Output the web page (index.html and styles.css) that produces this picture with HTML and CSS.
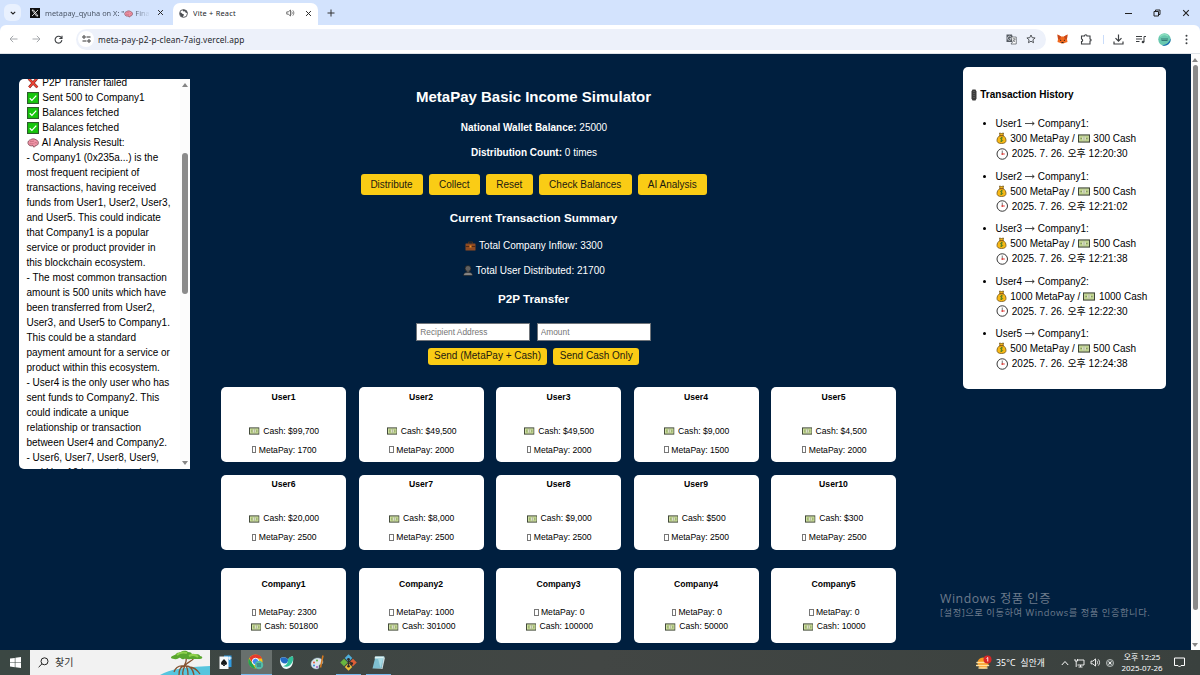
FILE: index.html
```html
<!DOCTYPE html>
<html lang="ko">
<head>
<meta charset="utf-8">
<title>Vite + React</title>
<link rel="stylesheet" href="styles.css">
</head>
<body>
<svg class="defs" width="0" height="0">
  <symbol id="cash" viewBox="0 0 22 16"><rect x="1" y="1.500" width="20" height="13" fill="#d3e3a6" stroke="#3d4435" stroke-width="2"/><rect x="4" y="4" width="14" height="8" fill="#b4cb80"/><ellipse cx="11" cy="8" rx="3.200" ry="4" fill="#eef3db"/><path d="M11 4v8M4.500 8h3M14.500 8h3" stroke="#75805e" stroke-width="1.300"/></symbol>
  <symbol id="check" viewBox="0 0 22 22"><rect x="1" y="1" width="20" height="20" fill="#16c60c" stroke="#2c5d2a" stroke-width="2"/><path d="M5 11.500l4 4L17 6.500" fill="none" stroke="#fff" stroke-width="2.200"/></symbol>
  <symbol id="cross" viewBox="0 0 22 22"><path d="M3 3l16 16M18 3L4 19" stroke="#6b211b" stroke-width="5"/><path d="M3 3l16 16M18 3L4 19" stroke="#ee4436" stroke-width="3"/></symbol>
  <symbol id="brain" viewBox="0 0 24 20"><path d="M2 11C1 7 4 4 7 3.500C10 1 15 1 18 3.500C22 4.500 24 9 22 12.500C21 15 18 15 17 15C16 18 14 19 13 18L12 15C8 17 3 15 2 11z" fill="#ef93a5" stroke="#75424e" stroke-width="1.500"/><path d="M6 8c3-3 5 0 8-2M5 12c3-2 4 1 8-1M15 10c2-2 4 0 5 0" fill="none" stroke="#b75d70" stroke-width="1.300"/></symbol>
  <symbol id="bag" viewBox="0 0 20 24"><path d="M6 2l4 1 4-1-1 5c4 2 6 6 6 10 0 4-3 6-9 6s-9-2-9-6c0-4 2-8 6-10z" fill="#f9b916" stroke="#6b4d12" stroke-width="1.500"/><path d="M6 7.500h8" stroke="#7d4b13" stroke-width="2"/><path d="M13 12c-5-2-7 2-3 3s3 5-3 3M10 10v10" fill="none" stroke="#3d7a28" stroke-width="1.500"/></symbol>
  <symbol id="clock" viewBox="0 0 24 24"><circle cx="12" cy="12" r="10.500" fill="#fff" stroke="#393939" stroke-width="2"/><path d="M12 5v8" stroke="#444" stroke-width="1.500"/><path d="M12 12h5" stroke="#e53935" stroke-width="2"/><circle cx="12" cy="12" r="1.700" fill="#e53935"/></symbol>
  <symbol id="case" viewBox="0 0 22 20"><path d="M7 5V2h8v3" fill="none" stroke="#44301f" stroke-width="2"/><rect x="1" y="5" width="20" height="14" rx="1" fill="#8e4a22"/><path d="M1 11h20" stroke="#522b15" stroke-width="2"/><rect x="9" y="9" width="4" height="4" fill="#f09024"/></symbol>
  <symbol id="person" viewBox="0 0 20 22"><circle cx="10" cy="7" r="6" fill="#606060" stroke="#1c1c1c" stroke-width="1.500"/><path d="M10 12v4" stroke="#4c4c4c" stroke-width="5"/><path d="M1 21c0-5 3-6 9-6s9 1 9 6z" fill="#858585" stroke="#161616"/></symbol>
  <symbol id="x" viewBox="0 0 8 8"><path d="M1.200 1.200l5.600 5.600M6.800 1.200L1.200 6.800" stroke="currentColor" stroke-width="1.100"/></symbol>
  <symbol id="speaker" viewBox="0 0 12 10"><path d="M1 3.500h2L6 1v8L3 6.500H1z" fill="none" stroke="currentColor"/><path d="M7.500 3c1 1 1 3 0 4M9 1.500c2 2 2 5 0 7" fill="none" stroke="currentColor" stroke-width=".9"/></symbol>
</svg>

<header class="browser">
  <div class="tabstrip">
    <div class="tab-search"><svg width="6" height="4" viewBox="0 0 6 4"><path d="M.8.800L3 3 5.200.800" fill="none" stroke="#1f1f1f" stroke-width="1.100"/></svg></div>
    <div class="tab tab-idle">
      <svg class="fav" width="10" height="10" viewBox="0 0 10 10"><rect width="10" height="10" fill="#111"/><path d="M2 2h1.500L8 8H6.500zM8 2L2 8" fill="none" stroke="#fff" stroke-width=".8"/></svg>
      <span class="tab-title">metapay_qyuha on X: "<svg width="9" height="8"><use href="#brain"/></svg> Fina</span>
      <svg class="close" width="7" height="7"><use href="#x"/></svg>
    </div>
    <div class="tab tab-active">
      <svg class="fav" width="9" height="9" viewBox="0 0 18 18"><circle cx="9" cy="9" r="7.800" fill="#fff" stroke="#4a4d51" stroke-width="1.800"/><path d="M2 7c4-1 3 3 6 3s1 4 0 6C4 16 1 12 2 7zM8 1.500c-1 3 1 4 3 3s1 3 3 3 2 2 3 1C17 4 13 1 8 1.500z" fill="#4a4d51"/></svg>
      <span class="tab-title">Vite + React</span>
      <svg class="sound" width="9" height="8" color="#444"><use href="#speaker"/></svg>
      <svg class="close" width="7" height="7"><use href="#x"/></svg>
    </div>
    <svg class="plus" width="8" height="8" viewBox="0 0 8 8"><path d="M4 .500v7M.5 4h7" stroke="#333" stroke-width="1"/></svg>
    <div class="window-buttons">
      <svg width="7" height="8" viewBox="0 0 7 8"><path d="M0 4.500h7" stroke="#222"/></svg>
      <svg width="8" height="8" viewBox="0 0 8 8"><path d="M1 2.500h4.500V7H1zM2.500 2.500V1H7v4.500H5.500" fill="none" stroke="#222"/></svg>
      <svg width="8" height="8"><use href="#x"/></svg>
    </div>
  </div>
  <div class="toolbar">
    <div class="nav">
      <svg width="9" height="8" viewBox="0 0 9 8"><path d="M8.500 4H1M4.200.800L1 4l3.200 3.200" fill="none" stroke="#a5a8ac"/></svg>
      <svg width="9" height="8" viewBox="0 0 9 8"><path d="M.5 4H8M4.800.800L8 4 4.800 7.200" fill="none" stroke="#a5a8ac"/></svg>
      <svg width="9" height="9" viewBox="0 0 9 9"><path d="M7.500 3A3.400 3.400 0 1 0 7.900 5.200M8 .800v2.700H5.300" fill="none" stroke="#3c3f42" stroke-width="1.100"/></svg>
    </div>
    <div class="address">
      <div class="site-info"><svg width="9" height="8" viewBox="0 0 9 8"><g fill="none" stroke="#333"><circle cx="2" cy="2" r="1.200"/><path d="M4.500 2H8.500M.5 6h4"/><circle cx="7" cy="6" r="1.200"/></g></svg></div>
      <span class="url">meta-pay-p2-p-clean-7aig.vercel.app</span>
      <svg class="translate" width="11" height="11" viewBox="0 0 22 22"><path d="M1 1h11l4 15H1z" fill="#555b62"/><path d="M11 6h9.500v14H10l3-4" fill="#fff" stroke="#555b62" stroke-width="1.500"/><path d="M10 6a4 4 0 1 0 0 5V9H7" fill="none" stroke="#e8ebf0" stroke-width="1.400"/><path d="M13 10h6M16 8v2M18 10c-1 3-3 5-5 6M14 12l4 4" fill="none" stroke="#555b62" stroke-width="1.300"/></svg>
      <svg width="10" height="10" viewBox="0 0 20 20"><path d="M10 2l2.400 5.300 5.800.6-4.400 3.800 1.300 5.700L10 14.500l-5.100 2.900 1.300-5.700L1.800 7.900l5.800-.6z" fill="none" stroke="#3c3f42" stroke-width="1.700"/></svg>
    </div>
    <div class="actions">
      <svg width="11" height="10" viewBox="0 0 22 20"><path d="M1 1l7 4h6l7-4-1 9 1 6-6 2-2 1H9l-2-1-6-2 1-6z" fill="#f0681d"/><path d="M1 1l7 4-2 6-4-1zM21 1l-7 4 2 6 4-1z" fill="#c9481a"/><path d="M6 11l3 2-3 1zM16 11l-3 2 3 1zM9 16h4v2H9z" fill="#33261f"/></svg>
      <svg class="puzzle" width="12" height="11" viewBox="0 0 12 11"><path d="M1.500 2h3c0-1.600 2.500-1.600 2.500 0h3v3c1.500 0 1.500 2 0 2v3h-8.500V7.500c1.500 0 1.500-2.500 0-2.500z" fill="none" stroke="#3c3f42" stroke-width="1.100"/></svg>
      <i class="divider"></i>
      <svg class="download" width="11" height="11" viewBox="0 0 11 11"><path d="M5.500.500v6.500M2.500 4.200l3 3 3-3M1 7.500V10h9V7.500" fill="none" stroke="#3c3f42" stroke-width="1.200"/></svg>
      <svg class="media" width="10" height="9" viewBox="0 0 10 9"><path d="M0 1.500h6M0 4h6M0 6.500h3.500M8 7V1.500h2" fill="none" stroke="#3c3f42"/><circle cx="7" cy="7" r="1.300" fill="#3c3f42"/></svg>
      <svg class="avatar" width="13" height="13" viewBox="0 0 26 26"><circle cx="13" cy="13" r="12.500" fill="#68c8ae"/><path d="M8 24.500a12.500 12.500 0 0 0 17-14c-1 7-7 13-17 14" fill="#1464b3"/><path d="M6 12h14M7 15h12" stroke="#347b75" stroke-width="2"/><path d="M4 7c5-6 12-5 16-1" fill="none" stroke="#8cdfbf" stroke-width="3"/></svg>
      <svg class="menu" width="3" height="11" viewBox="0 0 3 11"><g fill="#3c3f42"><circle cx="1.500" cy="1.700" r="1"/><circle cx="1.500" cy="5.500" r="1"/><circle cx="1.500" cy="9.300" r="1"/></g></svg>
    </div>
  </div>
</header>

<div class="viewport">
  <aside class="log">
    <div class="log-text">
      <p><svg class="em"><use href="#cross"/></svg> P2P Transfer failed</p>
      <p><svg class="em"><use href="#check"/></svg> Sent 500 to Company1</p>
      <p><svg class="em"><use href="#check"/></svg> Balances fetched</p>
      <p><svg class="em"><use href="#check"/></svg> Balances fetched</p>
      <p><svg class="em"><use href="#brain"/></svg> AI Analysis Result:</p>
      <p>- Company1 (0x235a...) is the<br>most frequent recipient of<br>transactions, having received<br>funds from User1, User2, User3,<br>and User5. This could indicate<br>that Company1 is a popular<br>service or product provider in<br>this blockchain ecosystem.</p>
      <p>- The most common transaction<br>amount is 500 units which have<br>been transferred from User2,<br>User3, and User5 to Company1.<br>This could be a standard<br>payment amount for a service or<br>product within this ecosystem.</p>
      <p>- User4 is the only user who has<br>sent funds to Company2. This<br>could indicate a unique<br>relationship or transaction<br>between User4 and Company2.</p>
      <p>- User6, User7, User8, User9,<br>and User10 have not made</p>
    </div>
    <div class="scrollbar log-scroll"><i class="up"></i><b></b><i class="down"></i></div>
  </aside>

  <main>
    <section class="panel">
      <h1>MetaPay Basic Income Simulator</h1>
      <p class="balance"><strong>National Wallet Balance:</strong> 25000</p>
      <p class="count"><strong>Distribution Count:</strong> 0 times</p>
      <div class="buttons">
        <button class="b1">Distribute</button><button class="b2">Collect</button><button class="b3">Reset</button><button class="b4">Check Balances</button><button class="b5">AI Analysis</button>
      </div>
      <h3 class="summary">Current Transaction Summary</h3>
      <p class="inflow"><svg class="em-s"><use href="#case"/></svg> Total Company Inflow: 3300</p>
      <p class="count"><svg class="em-p"><use href="#person"/></svg> Total User Distributed: 21700</p>
      <h3 class="p2p">P2P Transfer</h3>
      <div class="inputs"><input placeholder="Recipient Address"><input placeholder="Amount"></div>
      <div class="send"><button class="s1">Send (MetaPay + Cash)</button><button class="s2">Send Cash Only</button></div>
    </section>
    <section class="cards">
      <article><h4>User1</h4><p><svg class="bill"><use href="#cash"/></svg> Cash: $99,700</p><p><i class="box"></i> MetaPay: 1700</p></article>
      <article><h4>User2</h4><p><svg class="bill"><use href="#cash"/></svg> Cash: $49,500</p><p><i class="box"></i> MetaPay: 2000</p></article>
      <article><h4>User3</h4><p><svg class="bill"><use href="#cash"/></svg> Cash: $49,500</p><p><i class="box"></i> MetaPay: 2000</p></article>
      <article><h4>User4</h4><p><svg class="bill"><use href="#cash"/></svg> Cash: $9,000</p><p><i class="box"></i> MetaPay: 1500</p></article>
      <article><h4>User5</h4><p><svg class="bill"><use href="#cash"/></svg> Cash: $4,500</p><p><i class="box"></i> MetaPay: 2000</p></article>
      <article><h4>User6</h4><p><svg class="bill"><use href="#cash"/></svg> Cash: $20,000</p><p><i class="box"></i> MetaPay: 2500</p></article>
      <article><h4>User7</h4><p><svg class="bill"><use href="#cash"/></svg> Cash: $8,000</p><p><i class="box"></i> MetaPay: 2500</p></article>
      <article><h4>User8</h4><p><svg class="bill"><use href="#cash"/></svg> Cash: $9,000</p><p><i class="box"></i> MetaPay: 2500</p></article>
      <article><h4>User9</h4><p><svg class="bill"><use href="#cash"/></svg> Cash: $500</p><p><i class="box"></i> MetaPay: 2500</p></article>
      <article><h4>User10</h4><p><svg class="bill"><use href="#cash"/></svg> Cash: $300</p><p><i class="box"></i> MetaPay: 2500</p></article>
    </section>
    <section class="cards companies">
      <article><h4>Company1</h4><p><i class="box"></i> MetaPay: 2300</p><p><svg class="bill"><use href="#cash"/></svg> Cash: 501800</p></article>
      <article><h4>Company2</h4><p><i class="box"></i> MetaPay: 1000</p><p><svg class="bill"><use href="#cash"/></svg> Cash: 301000</p></article>
      <article><h4>Company3</h4><p><i class="box"></i> MetaPay: 0</p><p><svg class="bill"><use href="#cash"/></svg> Cash: 100000</p></article>
      <article><h4>Company4</h4><p><i class="box"></i> MetaPay: 0</p><p><svg class="bill"><use href="#cash"/></svg> Cash: 50000</p></article>
      <article><h4>Company5</h4><p><i class="box"></i> MetaPay: 0</p><p><svg class="bill"><use href="#cash"/></svg> Cash: 10000</p></article>
    </section>
  </main>

  <aside class="history">
    <h2><svg width="6" height="12" viewBox="0 0 12 24"><path d="M3 1h6l2 4v14l-2 4H3l-2-4V5z" fill="#3b3b3b"/><path d="M4 5h4M4 9h4M4 13h4M4 17h4" stroke="#555" stroke-width="2"/></svg> Transaction History</h2>
    <ul>
      <li>User1 <svg class="arrow" viewBox="0 0 20 10"><path d="M0 5h18M14 1.500L18.500 5 14 8.500" /></svg> Company1:<br><svg class="em-b"><use href="#bag"/></svg> 300 MetaPay / <svg class="em-c"><use href="#cash"/></svg> 300 Cash<br><svg class="em-k"><use href="#clock"/></svg> 2025. 7. 26. <span class="ko">오후</span> 12:20:30</li>
      <li>User2 <svg class="arrow" viewBox="0 0 20 10"><path d="M0 5h18M14 1.500L18.500 5 14 8.500" /></svg> Company1:<br><svg class="em-b"><use href="#bag"/></svg> 500 MetaPay / <svg class="em-c"><use href="#cash"/></svg> 500 Cash<br><svg class="em-k"><use href="#clock"/></svg> 2025. 7. 26. <span class="ko">오후</span> 12:21:02</li>
      <li>User3 <svg class="arrow" viewBox="0 0 20 10"><path d="M0 5h18M14 1.500L18.500 5 14 8.500" /></svg> Company1:<br><svg class="em-b"><use href="#bag"/></svg> 500 MetaPay / <svg class="em-c"><use href="#cash"/></svg> 500 Cash<br><svg class="em-k"><use href="#clock"/></svg> 2025. 7. 26. <span class="ko">오후</span> 12:21:38</li>
      <li>User4 <svg class="arrow" viewBox="0 0 20 10"><path d="M0 5h18M14 1.500L18.500 5 14 8.500" /></svg> Company2:<br><svg class="em-b"><use href="#bag"/></svg> 1000 MetaPay / <svg class="em-c"><use href="#cash"/></svg> 1000 Cash<br><svg class="em-k"><use href="#clock"/></svg> 2025. 7. 26. <span class="ko">오후</span> 12:22:30</li>
      <li>User5 <svg class="arrow" viewBox="0 0 20 10"><path d="M0 5h18M14 1.500L18.500 5 14 8.500" /></svg> Company1:<br><svg class="em-b"><use href="#bag"/></svg> 500 MetaPay / <svg class="em-c"><use href="#cash"/></svg> 500 Cash<br><svg class="em-k"><use href="#clock"/></svg> 2025. 7. 26. <span class="ko">오후</span> 12:24:38</li>
    </ul>
  </aside>
  <div class="scrollbar page-scroll"><i class="up"></i><b></b><i class="down"></i></div>
  <div class="watermark"><p>Windows 정품 인증</p><p>[설정]으로 이동하여 Windows를 정품 인증합니다.</p></div>
</div>

<footer class="taskbar">
  <div class="start"><svg width="11" height="11" viewBox="0 0 11 11"><path d="M0 1.500L4.800.900v4.300H0zM5.400.800L11 0v5.200H5.400zM0 5.800h4.800v4.400L0 9.500zM5.400 5.800H11V11l-5.600-.7z" fill="#fff"/></svg></div>
  <div class="search">
    <svg width="11" height="11" viewBox="0 0 11 11"><circle cx="6.500" cy="4.300" r="3.500" fill="none" stroke="#222"/><path d="M4 6.800L.6 10.200" stroke="#222"/></svg>
    <span>찾기</span>
    <svg class="tree" width="50" height="25" viewBox="0 0 50 25"><path d="M0 25C10 19 25 17 50 16v9z" fill="#56c5de"/><path d="M26 8c1 4-1 6-2 8M34 8c-2 4-8 4-9 8M25 16c-5 0-6 4-6 9M25 16c-2 3-3 5-2 9M26 16c5 0 7 4 8 9M26 16c2 3 2 5 2 9M29 17c6 0 9 4 11 7M24 16c-6-1-9 3-10 6" fill="none" stroke="#84512f" stroke-width="1.300"/><path d="M11 8c0-3 4-2 5-4s4-1 5-2c3-2 6-1 7 0 3 0 4 1 4 3 4-1 8-1 8 1 3 0 3 3 0 3H31c-3 1-5-1-7 0-3 1-3-2-5-1-3 2-6 1-8 0z" fill="#59a62f"/><path d="M17 5c3-3 6-3 10-2M29 6c4-2 7-1 9 1" fill="none" stroke="#8fd04d" stroke-width="2"/></svg>
  </div>
  <nav class="apps">
    <div class="app"><svg width="15" height="15" viewBox="0 0 30 30"><rect x="12" y="1" width="15" height="23" fill="#319be0"/><rect x="3" y="3" width="18" height="25" fill="#f6f8f9"/><path d="M12 8c3 4 6 5 6 9 0 3-4 4-5 1l1 4h-4l1-4c-1 3-5 2-5-1 0-4 3-5 6-9z" fill="#15191c"/><path d="M20 6h7M23.500 3v7" stroke="#fff" stroke-width="2"/></svg></div>
    <div class="app current"><svg width="16" height="16" viewBox="0 0 32 32"><circle cx="15" cy="15" r="14" fill="#fbc116"/><path d="M3 8a14 14 0 0 1 25 1H15l-6 9z" fill="#e33b2e"/><path d="M2 9l8 12 5 8A14 14 0 0 1 2 9z" fill="#22a455"/><circle cx="15" cy="15" r="6.500" fill="#4286f4" stroke="#fff" stroke-width="2"/><circle cx="22" cy="22" r="8.500" fill="#54bca8"/><path d="M17 20h9M18 24h8" stroke="#2b6670" stroke-width="2"/></svg></div>
    <div class="app"><svg width="15" height="15" viewBox="0 0 30 30"><path d="M2 7C8 3 14 4 18 9c3-5 6-6 10-6 2 14-3 24-13 25C7 28 1 18 2 7z" fill="#effbfb"/><path d="M2 7C8 3 14 4 18 9c1 4-2 8-6 8C7 17 3 13 2 7z" fill="#236bc5"/><path d="M18 9c3-5 6-6 10-6 1 9-1 13-8 19-4 3-9 1-13 0 7 0 11-5 11-13z" fill="#2fc099"/></svg></div>
    <div class="app"><svg width="15" height="15" viewBox="0 0 30 30"><path d="M2 18C2 10 10 5 17 6c7 1 10 6 8 11-2 3-6 1-7 4s2 6-4 7C7 28 2 24 2 18z" fill="#dbe5eb" stroke="#87a6bb"/><circle cx="8" cy="15" r="2" fill="#e85b38"/><circle cx="14" cy="11" r="2" fill="#5cb63d"/><circle cx="8" cy="21" r="2" fill="#318cda"/><circle cx="14" cy="24" r="2" fill="#9b5ac0"/><path d="M26 1l-5 24" stroke="#d57a20" stroke-width="3"/></svg></div>
    <div class="app running"><svg width="17" height="17" viewBox="0 0 32 32"><g transform="rotate(45 16 16)"><path d="M5 5h10v10H5z" fill="#4eaddb"/><path d="M17 5h10v10H17z" fill="#df5e36"/><path d="M5 17h10v10H5z" fill="#68b540"/><path d="M17 17h10v10H17z" fill="#edbd36"/></g><path d="M16 9v14M16 12l6 6" stroke="#312f2e" stroke-width="2"/><circle cx="16" cy="10" r="2.500" fill="#2e2b29"/><circle cx="22" cy="18" r="2.500" fill="#2e2b29"/><circle cx="16" cy="23" r="2.500" fill="#2e2b29"/></svg></div>
    <div class="app running"><svg width="15" height="15" viewBox="0 0 30 30"><path d="M9 3h18l-6 24H3z" fill="#7fc0d2"/><path d="M8 3h18l-1 4H7z" fill="#ddf3f5"/><path d="M25 5l3 0-5 23H5l16-1z" fill="#cbdce0"/><path d="M14 7h10l-5 19z" fill="#a9dbe4"/></svg></div>
  </nav>
  <div class="weather">
    <svg width="16" height="15" viewBox="0 0 32 30"><circle cx="14" cy="16" r="11" fill="#f79a21"/><path d="M2 15h20M1 21h24M6 26h16" stroke="#ffe2a1" stroke-width="3" stroke-linecap="round"/><circle cx="23" cy="9" r="8" fill="#d72828"/><path d="M21 7l2.500-2v8" fill="none" stroke="#fff" stroke-width="1.800"/></svg>
    <span>35°C&nbsp; 실안개</span>
  </div>
  <div class="tray">
    <svg width="8" height="6" viewBox="0 0 8 6"><path d="M.8 5L4 1.500 7.200 5" fill="none" stroke="#fff"/></svg>
    <svg width="11" height="10" viewBox="0 0 11 10"><path d="M4 2h6v5H3.500M6.500 7v2M4.500 9h4M1 1v2h2.500V1M2.200 3v6" fill="none" stroke="#fff" stroke-width=".9"/></svg>
    <svg width="11" height="9" color="#fff"><use href="#speaker"/></svg>
    <svg width="8" height="8" viewBox="0 0 8 8"><circle cx="4" cy="4" r="3.600" fill="#606866" stroke="#cfd2d1" stroke-width=".7"/><path d="M2.500 2.500l3 3M5.500 2.500l-3 3" stroke="#fff" stroke-width=".9"/></svg>
  </div>
  <div class="clock"><span>오후 12:25</span><span>2025-07-26</span></div>
  <svg class="notify" width="11" height="11" viewBox="0 0 11 11"><path d="M.5 1h10v7.500H7L5.500 10 4 8.500H.5z" fill="none" stroke="#fff"/></svg>
</footer>
</body>
</html>
```

FILE: styles.css
```css
* { box-sizing: border-box; }
body { margin: 0; width: 1200px; height: 675px; overflow: hidden; display: flex; flex-direction: column; font: 10px "Liberation Sans", Arial, "Noto Sans CJK KR", sans-serif; }
h1, h2, h3, h4, p, ul { margin: 0; padding: 0; }
svg { flex: none; }
.defs { position: absolute; }

/* Browser chrome */
.browser { height: 54px; flex: none; background: #d3e3fd; color: #24272b; font-family: "Noto Sans", "Noto Sans CJK KR", sans-serif; }
.tabstrip { height: 25px; display: flex; align-items: center; }
.tab-search { width: 17px; height: 17px; margin-left: 4px; border-radius: 6px; background: #e9f1fe; display: flex; align-items: center; justify-content: center; }
.tab { display: flex; align-items: center; height: 22px; font-size: 7.400px; white-space: nowrap; }
.tab-idle { width: 152px; padding: 0 9px; color: #4c5768; }
.tab-title { flex: 1; margin-left: 5px; overflow: hidden; }
.tab-title svg { vertical-align: -2px; }
.tab-idle .tab-title { -webkit-mask-image: linear-gradient(90deg, #000 85%, transparent); mask-image: linear-gradient(90deg, #000 85%, transparent); margin-right: 7px; }
.close { color: #222; }
.tab-active { width: 145px; height: 22px; margin-top: 3px; padding: 0 6px 2px; border-radius: 7px 7px 0 0; background: #fff; }
.tab-active .tab-title { letter-spacing: .2px; }
.sound { margin-right: 10px; }
.plus { margin-left: 9px; }
.window-buttons { margin-left: auto; display: flex; gap: 21px; padding-right: 10px; color: #222; }
.toolbar { height: 29px; background: #fff; border-radius: 6px 6px 0 0; border-bottom: 1px solid #dfe3e8; display: flex; align-items: center; }
.nav { width: 76px; display: flex; gap: 13.500px; padding-left: 9px; }
.address { width: 970px; height: 21px; padding: 0 10px 0 2px; border-radius: 11px; background: #edf1fa; display: flex; align-items: center; font-size: 8.300px; }
.url { letter-spacing: .13px; }
.site-info { width: 16px; height: 16px; margin-right: 4px; border-radius: 50%; background: #fff; display: flex; align-items: center; justify-content: center; }
.translate { margin-left: auto; margin-right: 9px; }
.actions { flex: 1; display: flex; align-items: center; padding-left: 11px; }
.puzzle { margin-left: 12px; }
.divider { width: 1px; height: 9px; margin-left: 11px; background: #c9dcfa; }
.download { margin-left: 9px; }
.media { margin-left: 12px; }
.avatar { margin-left: 12px; }
.menu { margin-left: 14px; }

/* Page */
.viewport { position: relative; height: 596px; flex: none; display: flex; align-items: flex-start; background: #001f3f; color: #fff; overflow: hidden; }
.log { width: 171px; height: 390px; margin: 25px 0 0 19px; background: #fff; color: #000; border-radius: 5px 0 0 5px; display: flex; overflow: hidden; flex: none; }
.log-text { width: 161px; padding-left: 7.500px; margin-top: -4px; line-height: 15px; white-space: nowrap; }
.em { width: 12px; height: 12px; vertical-align: -2.500px; margin-right: 1px; }
.scrollbar { display: flex; flex-direction: column; align-items: center; background: #fcfcfc; }
.scrollbar b { width: 5.500px; border-radius: 3px; background: #8b8b8b; }
.up, .down { border: 3px solid transparent; }
.up { border-top: 0; border-bottom: 4px solid #858585; }
.down { border-bottom: 0; border-top: 4px solid #858585; }
.log-scroll { width: 10px; height: 390px; padding: 4px 0; }
.log-scroll b { height: 141px; margin: 66px 0 auto; }
.page-scroll { width: 9.500px; height: 596px; margin-left: auto; padding: 4px 0 3px; }
.page-scroll b { height: 545px; margin: 3px 0 auto; }

main { width: 675px; margin-left: 31px; flex: none; }
.panel { width: 625px; height: 333px; padding-top: 33px; text-align: center; }
h1 { height: 20px; line-height: 20px; font-size: 15px; }
.panel p { height: 14px; line-height: 14px; padding-left: 1px; }
.panel .balance { margin-top: 14px; }
.panel .count { margin-top: 11px; }
.buttons { display: flex; justify-content: center; gap: 6.500px; margin-top: 14px; }
button { font: 10px "Liberation Sans", Arial, sans-serif; color: #1c1a10; background: #facc15; border: 0; border-radius: 3px; padding: 0; white-space: nowrap; }
.buttons button { height: 21px; }
.b1 { width: 62px; } .b2 { width: 50.500px; } .b3 { width: 46.500px; } .b4 { width: 92.500px; } .b5 { width: 68.500px; }
h3 { height: 16px; line-height: 16px; font-size: 11.700px; }
.summary { margin-top: 15px; }
.panel .inflow { margin-top: 13px; }
.p2p { margin-top: 13px; }
.em-s { width: 11px; height: 10px; vertical-align: -2px; }
.em-p { width: 10px; height: 11px; vertical-align: -2px; }
.inputs { display: flex; justify-content: center; gap: 6.500px; margin-top: 16px; }
input { width: 114px; height: 18px; padding: 0 3px; border: 1px solid #6f747a; background: #fff; font: 8.330px "Liberation Sans", Arial, sans-serif; border-radius: 0; }
input::placeholder { color: #757575; }
.send { display: flex; justify-content: center; gap: 6px; margin-top: 6.500px; }
.send button { height: 17.500px; line-height: 16px; }
.s1 { width: 119.500px; } .s2 { width: 86px; }
.cards { display: grid; grid-template-columns: repeat(5, 125px); gap: 12.500px; text-align: center; color: #000; }
.cards article { height: 75px; border-radius: 5px; background: #fff; padding-top: 3.500px; font-size: 8.600px; line-height: 12px; }
.cards h4 { font-size: 8.650px; margin-bottom: 22px; }
.cards p { padding-left: 1.500px; }
.cards p + p { margin-top: 7px; }
.companies { margin-top: 18.500px; }
.companies article { padding-top: 10px; }
.companies h4 { margin-bottom: 16px; }
.companies p + p { margin-top: 2px; }
.bill { width: 10.500px; height: 8px; vertical-align: -1.500px; margin-right: 1px; }
.box { display: inline-block; width: 4.500px; height: 7px; border: 1px solid #777; vertical-align: -.5px; }

.history { width: 203px; height: 322px; margin: 13px 0 0 67px; padding: 20px 7.500px 0; border-radius: 5px; background: #fff; color: #000; flex: none; }
.history h2 { font-size: 10px; line-height: 15px; height: 29px; }
.history h2 svg { vertical-align: -3px; margin-right: 1px; }
.history ul { padding-left: 25px; line-height: 15px; }
.history li { height: 52.500px; white-space: nowrap; }
.arrow { width: 10px; height: 5px; vertical-align: 1px; fill: none; stroke: #111; stroke-width: 1.500; }
.em-b { width: 11px; height: 12px; vertical-align: -2px; margin-right: 1px; }
.em-c { width: 12px; height: 9px; vertical-align: -1px; margin-right: 1px; }
.em-k { width: 12.500px; height: 12px; vertical-align: -2.500px; margin-right: 1px; }
.ko { font-family: "Noto Sans CJK KR", sans-serif; line-height: 1; }
.watermark { position: absolute; left: 940px; top: 536px; color: #6d7b8c; font-family: "Open Sans", "Noto Sans CJK KR", sans-serif; white-space: nowrap; }
.watermark p { font-size: 9.300px; line-height: 12px; letter-spacing: .52px; }
.watermark p:first-child { font-size: 12.300px; line-height: 17px; letter-spacing: .55px; }

/* Taskbar */
.taskbar { height: 25px; flex: none; display: flex; align-items: center; background: linear-gradient(90deg, #3b4743, #424644 50%, #3a413e); color: #fff; font-family: "Noto Sans", "Noto Sans CJK KR", sans-serif; }
.start { width: 30px; display: flex; justify-content: center; }
.search { width: 180px; height: 25px; background: #f2f2f2; color: #333; display: flex; align-items: center; padding-left: 8px; gap: 6px; font-size: 10px; }
.search span { margin-top: -2px; }
.tree { margin-left: auto; }
.apps { display: flex; height: 25px; margin-left: .5px; }
.app { width: 30.600px; height: 25px; display: flex; align-items: center; justify-content: center; }
.current { background: #68706d; border-bottom: 1.500px solid #76b9ed; }
.running { background: linear-gradient(#76b9ed, #76b9ed) center bottom / 25px 1.500px no-repeat; }
.weather { margin-left: auto; display: flex; align-items: center; gap: 4px; width: 85px; font-size: 8.700px; letter-spacing: .15px; white-space: nowrap; }
.tray { display: flex; align-items: center; gap: 5px; }
.clock { width: 56px; display: flex; flex-direction: column; align-items: center; font-size: 7.900px; line-height: 11px; }
.notify { margin: 0 15px 0 4px; }
```
